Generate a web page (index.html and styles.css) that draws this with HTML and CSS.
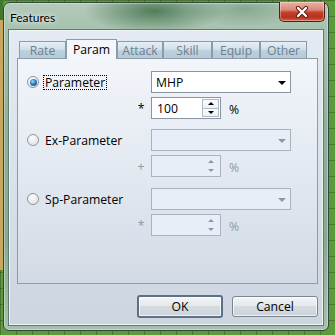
FILE: index.html
```html
<!DOCTYPE html>
<html>
<head>
<meta charset="utf-8">
<link rel="stylesheet" href="styles.css">
</head>
<body>
<div class="window">
  <div class="titlebar">
    <span class="title">Features</span>
    <div class="close">
      <svg width="14" height="12" viewBox="0 0 14 12">
        <path d="M3 2 L11 10 M11 2 L3 10" stroke="#5a1a12" stroke-width="4.2" stroke-linecap="round" fill="none"/>
        <path d="M3 2 L11 10 M11 2 L3 10" stroke="#ffffff" stroke-width="2.4" stroke-linecap="round" fill="none"/>
      </svg>
    </div>
  </div>
  <div class="client">
    <div class="tabs">
      <div class="tab tab-rate">Rate</div>
      <div class="tab tab-param active">Param</div>
      <div class="tab tab-attack">Attack</div>
      <div class="tab tab-skill">Skill</div>
      <div class="tab tab-equip">Equip</div>
      <div class="tab tab-other">Other</div>
    </div>
    <div class="panel">
      <div class="group">
        <div class="opt"><span class="radio checked"><span class="dot"></span></span><span class="label focus">Parameter</span></div>
        <div class="combo"><span class="combo-text">MHP</span><span class="arrow"></span></div>
        <span class="op">*</span>
        <div class="spinrow">
          <div class="spin">
            <span class="spin-text">100</span>
            <div class="spin-btns">
              <span class="sbtn"><span class="up"></span></span>
              <span class="sbtn"><span class="down"></span></span>
            </div>
          </div>
          <span class="pct">%</span>
        </div>
      </div>
      <div class="group disabled">
        <div class="opt"><span class="radio"></span><span class="label">Ex-Parameter</span></div>
        <div class="combo"><span class="combo-text"></span><span class="arrow"></span></div>
        <span class="op">+</span>
        <div class="spinrow">
          <div class="spin">
            <span class="spin-text"></span>
            <div class="spin-btns">
              <span class="sbtn"><span class="up"></span></span>
              <span class="sbtn"><span class="down"></span></span>
            </div>
          </div>
          <span class="pct">%</span>
        </div>
      </div>
      <div class="group disabled last">
        <div class="opt"><span class="radio"></span><span class="label">Sp-Parameter</span></div>
        <div class="combo"><span class="combo-text"></span><span class="arrow"></span></div>
        <span class="op">*</span>
        <div class="spinrow">
          <div class="spin">
            <span class="spin-text"></span>
            <div class="spin-btns">
              <span class="sbtn"><span class="up"></span></span>
              <span class="sbtn"><span class="down"></span></span>
            </div>
          </div>
          <span class="pct">%</span>
        </div>
      </div>
    </div>
    <div class="buttons">
      <div class="btn default">OK</div>
      <div class="btn">Cancel</div>
    </div>
  </div>
</div>
</body>
</html>
```

FILE: styles.css
```css
* { box-sizing: border-box; }

html, body {
  margin: 0;
  width: 335px;
  height: 335px;
  overflow: hidden;
}

body {
  background-color: #5c9a3b;
  background-image:
    linear-gradient(to bottom, #3f7a2c 0, #3f7a2c 20px, #c9a75c 20px, #c9a75c 270px, transparent 270px),
    repeating-linear-gradient(to right, rgba(0,0,0,0.22) 0 1px, transparent 1px 16px),
    repeating-linear-gradient(to bottom, rgba(0,0,0,0.22) 0 1px, transparent 1px 16px);
  background-size: 3px 100%, auto, auto;
  background-repeat: no-repeat, repeat, repeat;
  padding-top: 2px;
  padding-left: 3px;
  font-family: "Open Sans", "Noto Sans", sans-serif;
  font-size: 12.2px;
  font-weight: 380;
  color: #000;
}

.window {
  width: 326px;
  height: 329px;
  border: 1px solid #33473c;
  border-radius: 7px 7px 6px 6px;
  padding: 0 5px 5px 5px;
  display: flex;
  flex-direction: column;
  background:
    radial-gradient(70px 22px at 150px 8px, rgba(48, 100, 58, 0.75), rgba(48,100,58,0) 100%),
    radial-gradient(60px 18px at 240px 6px, rgba(70, 120, 80, 0.4), rgba(70,120,80,0) 100%),
    linear-gradient(to bottom, #b4cabb 0, #a7c2af 26px, #8db199 120px, #86ab91 240px, #a6c1ae 100%);
  box-shadow: inset 0 0 0 1px rgba(255,255,255,0.35);
}

.titlebar {
  height: 27px;
  display: flex;
  justify-content: space-between;
  align-items: flex-start;
}

.title {
  font-family: "Lato", "Noto Sans", sans-serif;
  font-size: 12px;
  font-weight: 400;
  margin-top: 7px;
  margin-left: 1px;
  color: #000;
  text-shadow: 0 0 6px rgba(255,255,255,0.9), 0 0 3px rgba(255,255,255,0.7);
}

.close {
  width: 46px;
  height: 20px;
  margin-top: -1px;
  margin-right: -2px;
  border: 1px solid #5b1c14;
  border-top: none;
  border-radius: 0 0 5px 5px;
  background: linear-gradient(to bottom, #eab1a4 0, #dc8b7a 40%, #c2412c 55%, #b8311e 80%, #d0604a 100%);
  box-shadow: inset 0 0 0 1px rgba(255,255,255,0.35);
  display: flex;
  align-items: center;
  justify-content: center;
}

.client {
  flex: 1;
  border: 1px solid #eef3f4;
  box-shadow: 0 0 0 1px #5e7d6d;
  background: linear-gradient(to bottom, #e4eaf2 0, #d9e1ea 50%, #ccd5e0 100%);
  padding: 8px 4px 0 7px;
  display: flex;
  flex-direction: column;
}

.tabs {
  display: flex;
  align-items: flex-end;
  height: 20px;
  margin-bottom: -1px;
  padding-left: 2px;
  position: relative;
  z-index: 1;
}

.tab {
  height: 17px;
  margin-bottom: 1px;
  border: 1px solid #8b9ba8;
  border-bottom: none;
  background: linear-gradient(to bottom, #e6eef5 0, #d3e1ea 45%, #bcd0dd 55%, #b5cbd9 100%);
  color: #6d808f;
  text-align: center;
  padding-top: 1px;
  line-height: 15px;
}

.tab-rate { width: 47px; }
.tab-param { width: 51px; }
.tab-attack { width: 46px; }
.tab-skill { width: 49px; }
.tab-equip { width: 48px; }
.tab-other { width: 47px; }

.tab.active {
  height: 20px;
  margin-bottom: 0;
  background: #f3f6fb;
  color: #000;
  padding-top: 2px;
}

.panel {
  height: 226px;
  border: 1px solid #8d9ca8;
  background: linear-gradient(to bottom, #f2f5fa 0, #e3e9f1 50%, #d2dae4 100%);
  padding: 12px 0 0 9px;
}

.group {
  display: grid;
  grid-template-columns: 124px auto;
  grid-template-rows: 22px 22px;
  row-gap: 4px;
  align-items: center;
}

.group + .group { margin-top: 10px; }
.group.last { margin-top: 11px; }

.opt {
  display: flex;
  align-items: center;
}

.radio {
  width: 12px;
  height: 12px;
  border-radius: 50%;
  border: 1px solid #8a949e;
  background: radial-gradient(circle at 45% 35%, #ffffff 0, #eeeeee 40%, #cfd3d7 100%);
  display: flex;
  align-items: center;
  justify-content: center;
  box-shadow: inset 0 0 0 1px rgba(255,255,255,0.6);
}

.radio .dot {
  width: 7px;
  height: 7px;
  border-radius: 50%;
  background: radial-gradient(circle at 40% 35%, #a8e0ff 0, #3c8fd2 35%, #1c5c9c 70%, #0e3b6a 100%);
}

.label {
  margin-left: 4px;
  padding: 0 1px;
  line-height: 13px;
  border: 1px solid transparent;
}

.label.focus {
  border: 1px dotted #000;
}

.combo {
  width: 140px;
  height: 22px;
  border: 1px solid #8a95a1;
  background: #fff;
  display: flex;
  align-items: center;
  justify-content: space-between;
  padding: 0 4px 0 4px;
}

.arrow {
  width: 0;
  height: 0;
  border-left: 4px solid transparent;
  border-right: 4px solid transparent;
  border-top: 4px solid #000;
  margin-top: 1px;
}

.op {
  justify-self: end;
  width: 10px;
  margin-right: 5px;
  text-align: center;
  color: #000;
}

.spinrow {
  display: flex;
  align-items: center;
}

.spin {
  width: 70px;
  height: 22px;
  border: 1px solid #8a95a1;
  background: #fff;
  display: flex;
  align-items: center;
  justify-content: space-between;
  padding: 0 1px 0 5px;
}

.spin-btns {
  display: flex;
  flex-direction: column;
  height: 18px;
  width: 17px;
}

.sbtn {
  flex: 1;
  border: 1px solid #b0b9c3;
  background: linear-gradient(to bottom, #fbfcfd, #eef1f4);
  display: flex;
  align-items: center;
  justify-content: center;
}

.sbtn + .sbtn { margin-top: -1px; }

.up {
  width: 0; height: 0;
  border-left: 3px solid transparent;
  border-right: 3px solid transparent;
  border-bottom: 3px solid #000;
}

.down {
  width: 0; height: 0;
  border-left: 3px solid transparent;
  border-right: 3px solid transparent;
  border-top: 3px solid #000;
}

.pct {
  margin-left: 8px;
  margin-top: 2px;
}

.disabled .combo,
.disabled .spin {
  border-color: #a9b3be;
  background: #e8eef7;
}

.disabled .arrow { border-top-color: #8e99a5; }
.disabled .up { border-bottom-color: #8e99a5; }
.disabled .down { border-top-color: #8e99a5; }
.disabled .sbtn { border-color: transparent; background: transparent; }
.disabled .op,
.disabled .pct { color: #8e99a5; }

.buttons {
  display: flex;
  justify-content: flex-end;
  align-items: center;
  gap: 9px;
  margin-top: 11px;
}

.btn {
  width: 86px;
  height: 21px;
  border: 1px solid #7a8590;
  border-radius: 3px;
  background: linear-gradient(to bottom, #f3f5f7 0, #e6e9ec 45%, #d6dbe0 50%, #cdd3d9 100%);
  box-shadow: inset 0 0 0 1px rgba(255,255,255,0.7);
  display: flex;
  align-items: center;
  justify-content: center;
  color: #000;
}

.btn.default {
  height: 23px;
  border: 2px solid #5c7088;
}
```
